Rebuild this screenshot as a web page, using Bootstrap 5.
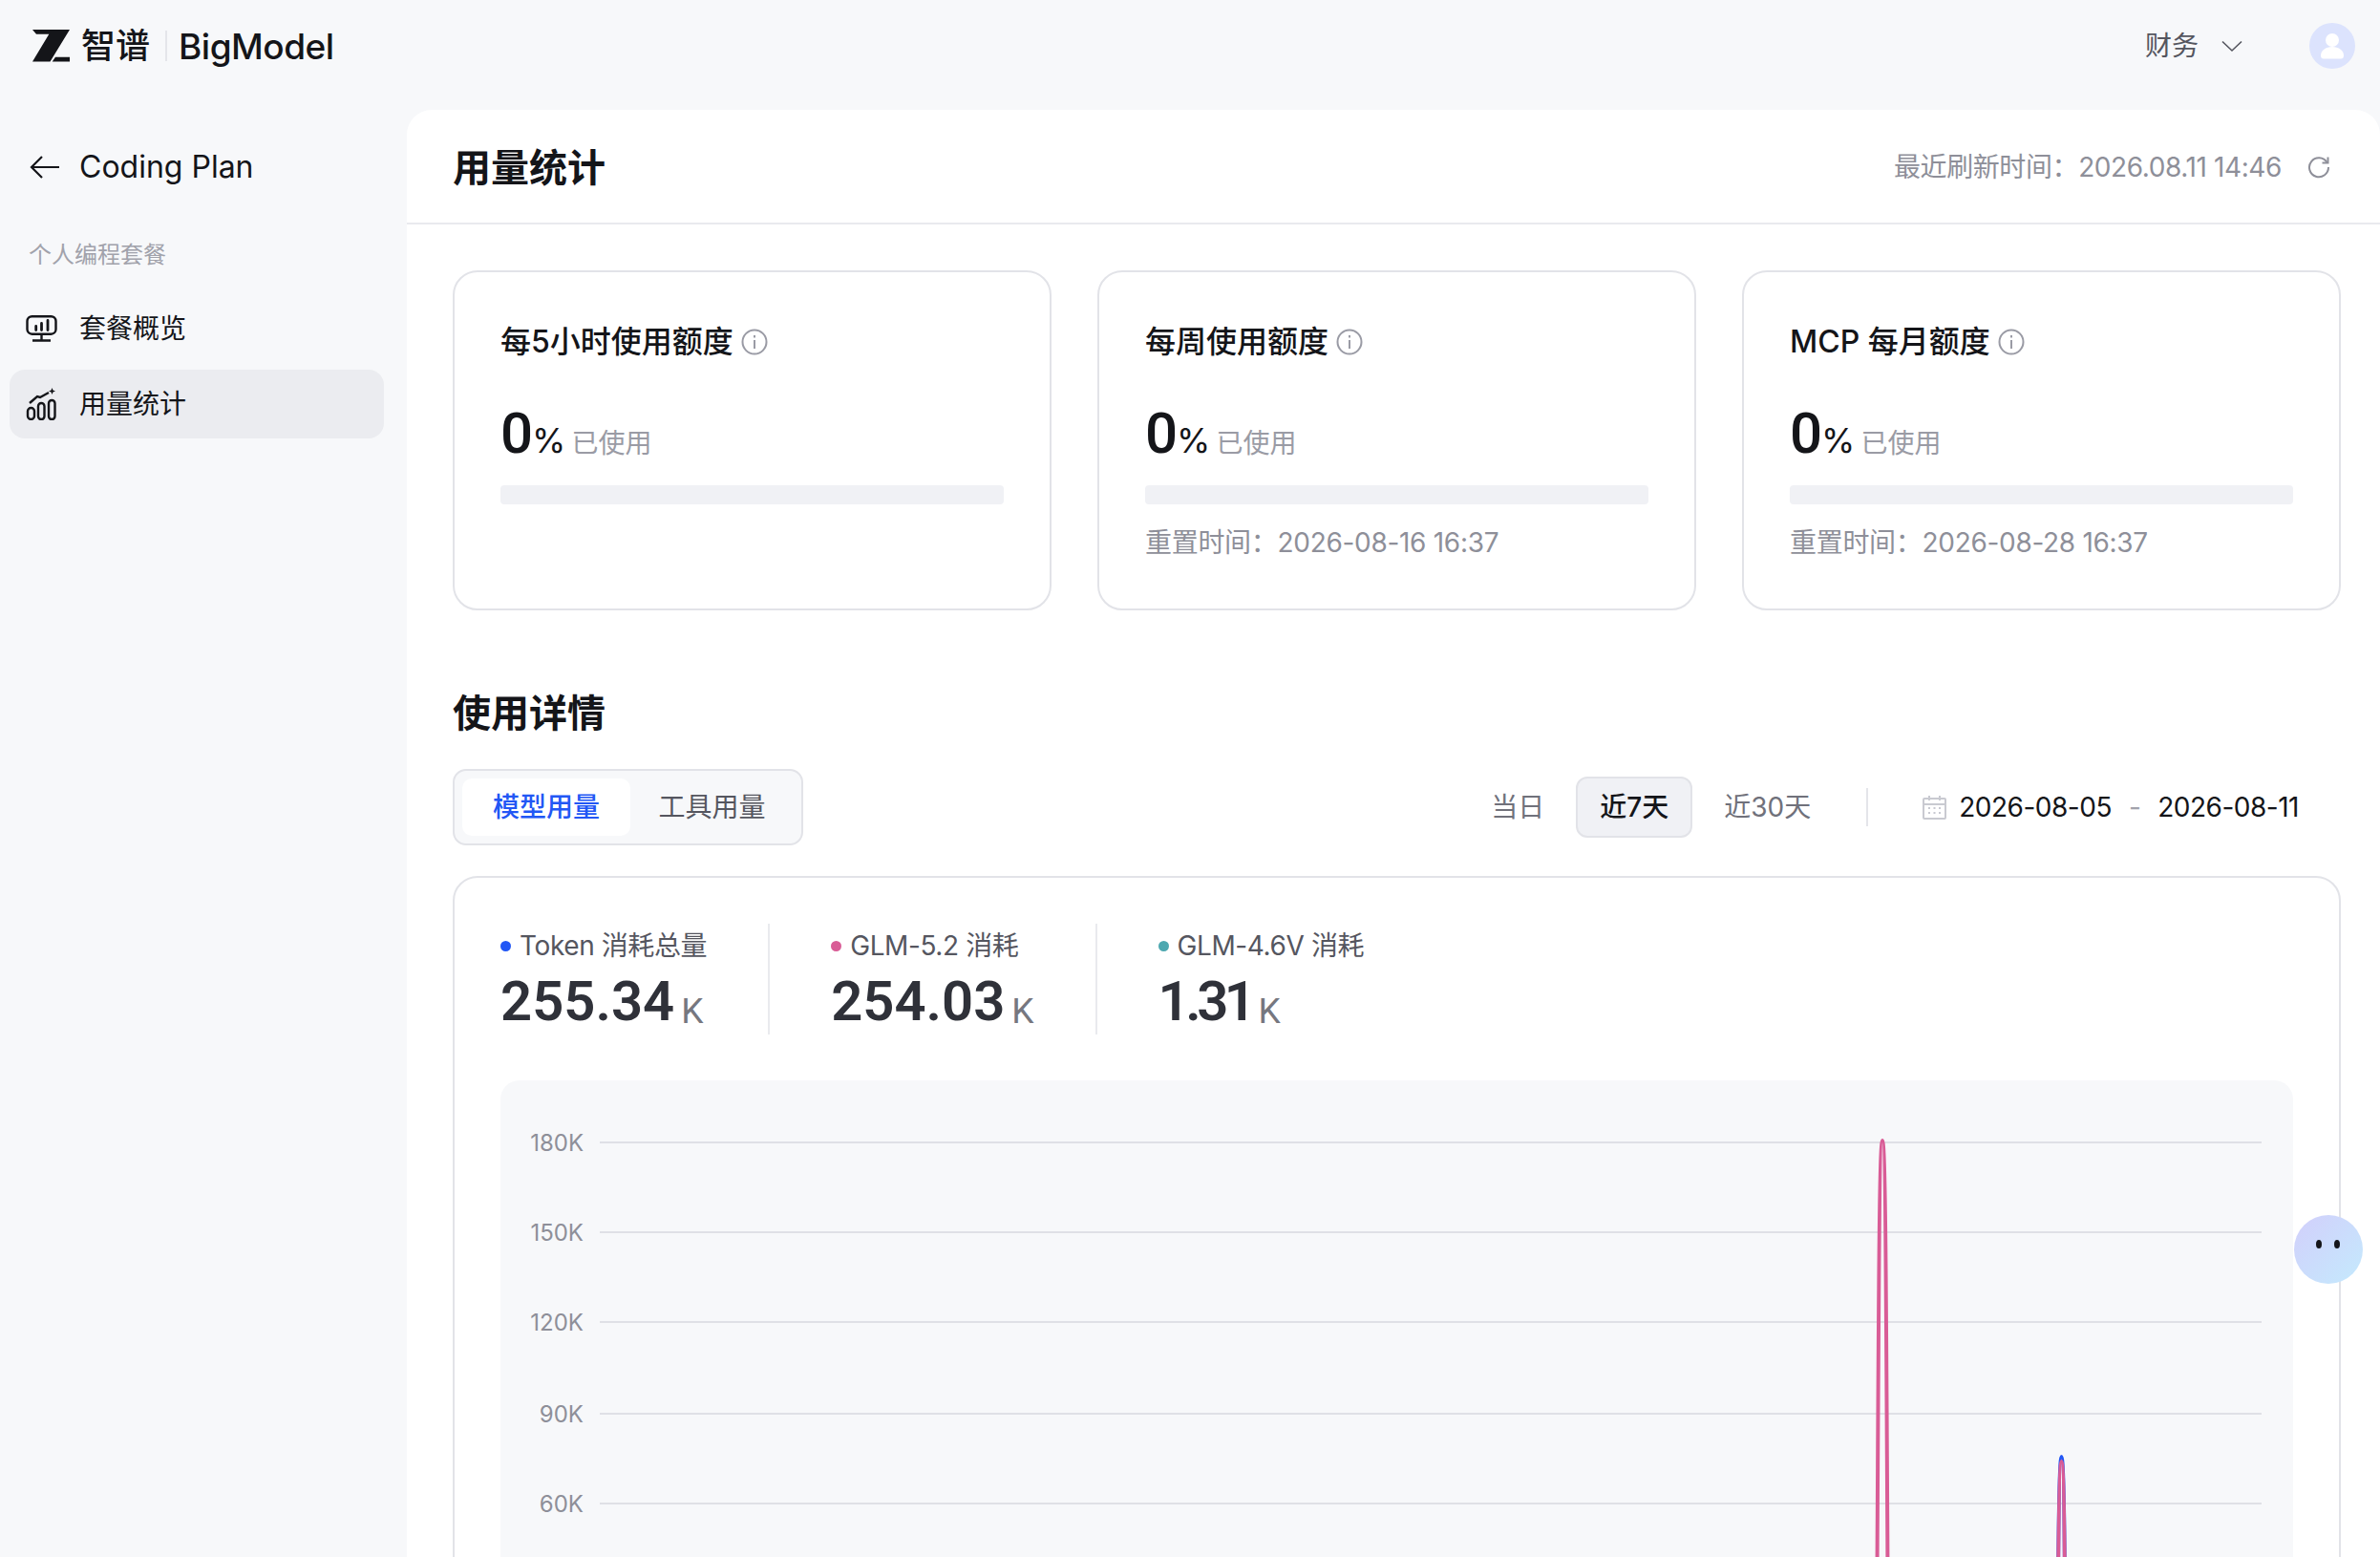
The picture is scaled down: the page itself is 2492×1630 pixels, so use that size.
<!DOCTYPE html>
<html lang="zh-CN">
<head>
    <meta charset="UTF-8">
    <title>BigModel - 用量统计</title>
    <link href="https://cdn.jsdelivr.net/npm/bootstrap@5.3.0/dist/css/bootstrap.min.css" rel="stylesheet">
    <style>
        html, body { height: 100%; }
        body {
            background: #f7f8fa;
            color: #141519;
            font-family: Inter, "Noto Sans CJK SC", sans-serif;
            overflow: hidden;
        }
        .top-strip { height: 115px; padding: 0 26px 19px 34px; }
        .logo-cn { font-size: 36px; font-weight: 500; margin-left: 12px; line-height: 1; }
        .logo-sep { width: 2px; height: 32px; background: #e4e5ea; margin: 0 12px 0 16px; }
        .logo-en { font-size: 37px; font-weight: 500; letter-spacing: -.5px; line-height: 1; }
        .top-link { font-size: 28px; color: #55565f; }
        .top-face { width: 48px; height: 48px; border-radius: 50%; background: #dce3fd; margin-left: 70px; }

        .side-col { width: 426px; flex: none; padding: 0 24px 0 10px; }
        .side-head { font-size: 32px; height: 119px; padding-left: 21px; gap: 20px; }
        .side-group { font-size: 24px; color: #a1a2ab; padding: 19px 0 0 20px; line-height: 1; margin-bottom: 29px; margin-top: 2px; }
        .side-item { height: 72px; font-size: 28px; padding-left: 17px; gap: 22px; border-radius: 16px; margin-bottom: 7px; color: #141519; }
        .side-on { background: #ebecf0; }

        .main-pane { background: #fff; border-radius: 26px 26px 0 0; min-width: 0; }
        .pane-head { height: 120px; padding: 0 52px 0 48px; border-bottom: 2px solid #e9eaee; }
        .pane-title { font-size: 40px; font-weight: 600; margin: 0; line-height: 1.2; padding-top: 3px; }
        .pane-time { font-size: 28px; color: #8e8f99; letter-spacing: -.4px; padding-top: 2px; }
        .pane-time svg { margin-left: 27px; }
        .pane-body { padding: 48px 41px 0 48px; }

        .quota-grid { display: grid; grid-template-columns: repeat(3, 1fr); gap: 48px; }
        .quota-box { height: 356px; border: 2px solid #e2e3e8; border-radius: 26px; padding: 50px 48px 0; }
        .quota-name { font-size: 32px; font-weight: 500; line-height: 46px; }
        .quota-num { margin-top: 35px; line-height: 76px; height: 76px; }
        .quota-num b { font-family: Roboto, sans-serif; font-size: 60px; font-weight: 500; }
        .quota-num i { font-style: normal; font-size: 36px; margin-left: -1px; }
        .quota-num span { font-size: 28px; color: #9a9ba5; margin-left: 6px; }
        .quota-bar { height: 20px; background: #f0f1f5; border-radius: 4px; margin-top: 16px; }
        .quota-reset { font-size: 28px; color: #8e8f99; margin-top: 20px; line-height: 40px; letter-spacing: -.3px; }

        .detail-title { font-size: 40px; font-weight: 600; margin: 84px 0 34px; height: 48px; line-height: 48px; }
        .seg-box { height: 80px; width: 367px; border: 2px solid #e2e3e8; border-radius: 14px; background: #f7f8fa; padding: 8px; font-size: 28px; color: #55565f; }
        .seg-item { width: 176px; text-align: center; line-height: 60px; border-radius: 10px; }
        .seg-on { background: #fff; color: #2257f5; font-weight: 500; }
        .seg-alt { flex: 1; text-align: center; line-height: 60px; }

        .range-tab { font-size: 28px; color: #70717b; height: 64px; line-height: 64px; padding: 0 33px; }
        .range-on { background: #f0f1f5; border: 2px solid #e2e3e8; border-radius: 12px; color: #141519; font-weight: 500; padding: 0 23px; line-height: 60px; }
        .range-sep { width: 2px; height: 40px; background: #e4e5ea; margin: 0 57px 0 25px; }
        .range-date { font-size: 28px; padding-right: 44px; letter-spacing: -.5px; }
        .range-date svg { margin-right: 13px; }
        .range-dash { color: #a1a2ab; margin: 0 18px; }

        .chart-box { border: 2px solid #e2e3e8; border-radius: 26px 26px 0 0; margin-top: 32px; padding: 48px 48px 0; height: 900px; }
        .stat-item { padding-right: 64px; height: 116px; margin-right: 64px; border-right: 2px solid #e9eaee; }
        .stat-item:last-child { border-right: 0; }
        .stat-label { font-size: 28px; color: #55565f; line-height: 36px; display: flex; align-items: center; gap: 9px; padding-top: 5px; letter-spacing: -.4px; }
        .stat-dot { width: 11px; height: 11px; border-radius: 50%; }
        .stat-val { font-family: Roboto, sans-serif; font-size: 58px; font-weight: 600; color: #2f3139; line-height: 66px; margin-top: 7px; white-space: nowrap; }
        .stat-val small { font-size: 37px; font-weight: 400; color: #76777f; margin-left: 7px; vertical-align: -3px; }
        .stat-tight { letter-spacing: -4.500px; }
        .plot-box { background: #f7f8fa; border-radius: 20px; margin-top: 48px; height: 700px; }
        .plot-box svg { display: block; }
        .plot-box text { font-size: 24px; fill: #8e8f99; font-family: Inter, sans-serif; }

        .help-blob {
            position: fixed; left: 2402px; top: 1272px; width: 72px; height: 72px; border-radius: 50%;
            background: linear-gradient(135deg, #d2cffb, #c4eafd);
        }
        .help-blob::before, .help-blob::after {
            content: ""; position: absolute; top: 26px; width: 6px; height: 9px; border-radius: 50%; background: #141519;
        }
        .help-blob::before { left: 23px; }
        .help-blob::after { left: 42px; }
    </style>
</head>
<body class="d-flex flex-column">

<!-- 顶部 -->
<header class="top-strip d-flex align-items-center justify-content-between flex-shrink-0">
    <div class="d-flex align-items-center">
        <svg width="39" height="34" viewBox="0 0 39 34" fill="#141519"><path d="M0 0H39L18.500 33.500H0L17.300 4.700H4Z"/><path d="M24 28.700H39V33.500H20.700Z"/></svg>
        <span class="logo-cn">智谱</span>
        <span class="logo-sep"></span>
        <span class="logo-en">BigModel</span>
    </div>
    <div class="d-flex align-items-center">
        <span class="top-link">财务</span>
        <svg class="ms-4" width="22" height="13" viewBox="0 0 22 13" fill="none" stroke="#55565f" stroke-width="1.600"><path d="M1 1.500L11 11L21 1.500"/></svg>
        <div class="top-face d-flex align-items-center justify-content-center">
            <svg width="26" height="27" viewBox="0 0 26 27" fill="#fff"><circle cx="13" cy="7" r="7"/><path d="M1 23C1 18 6 14 13 14S25 18 25 23C25 25.500 24 26.500 22 26.500H4C2 26.500 1 25.500 1 23Z"/></svg>
        </div>
    </div>
</header>

<div class="d-flex flex-grow-1" style="min-height:0">
    <!-- 左侧菜单 -->
    <aside class="side-col">
        <div class="side-head d-flex align-items-center">
            <svg width="32" height="26" viewBox="0 0 32 26" fill="none" stroke="#141519" stroke-width="2.200"><path d="M31 13H2M13 2L2 13L13 24"/></svg>
            <span>Coding Plan</span>
        </div>
        <div class="side-group">个人编程套餐</div>
        <div class="side-item d-flex align-items-center">
            <svg width="34" height="28" viewBox="0 0 34 28" fill="none" stroke="#141519" stroke-width="2.400"><rect x="1.500" y="1.200" width="30" height="18.500" rx="5"/><path d="M10.700 11.500V15.500M16.500 8.500V15.500M23 5.500V15.500" stroke-width="2.800" stroke-linecap="round"/><path d="M7 26.500H26M16.500 20V26"/></svg>
            <span>套餐概览</span>
        </div>
        <div class="side-item side-on d-flex align-items-center">
            <svg width="34" height="34" viewBox="0 0 34 34" fill="none" stroke="#141519" stroke-width="2.400"><rect x="2" y="21" width="7" height="12" rx="3.500"/><rect x="13" y="16" width="6.500" height="17" rx="3.250"/><rect x="24" y="13" width="6.500" height="20" rx="3.250"/><path d="M4 16L12 9L15 10L24 5"/><path d="M27.500 0L28.500 2.500L31 3.500L28.500 4.500L27.500 7L26.500 4.500L24 3.500L26.500 2.500Z" fill="#141519" stroke="none"/></svg>
            <span>用量统计</span>
        </div>
    </aside>

    <!-- 内容 -->
    <main class="main-pane flex-grow-1">
        <div class="pane-head d-flex align-items-center justify-content-between">
            <h1 class="pane-title">用量统计</h1>
            <div class="pane-time d-flex align-items-center">
                <span>最近刷新时间：2026.08.11 14:46</span>
                <svg width="24" height="24" viewBox="0 0 24 24" fill="none" stroke="#8e8f99" stroke-width="2"><path d="M20.500 7A10 10 0 1 0 22 12"/><path d="M21.500 1.500V7.500H15.500"/></svg>
            </div>
        </div>

        <div class="pane-body">
            <div class="quota-grid">
                <div class="quota-box">
                    <div class="quota-name d-flex align-items-center gap-2">每5小时使用额度 <svg width="28" height="28" viewBox="0 0 28 28" fill="none" stroke="#9a9ba5" stroke-width="2"><circle cx="14" cy="14" r="12.500"/><path d="M14 12V21M14 7V9.500"/></svg></div>
                    <div class="quota-num"><b>0</b><i>%</i><span>已使用</span></div>
                    <div class="quota-bar"></div>
                </div>
                <div class="quota-box">
                    <div class="quota-name d-flex align-items-center gap-2">每周使用额度 <svg width="28" height="28" viewBox="0 0 28 28" fill="none" stroke="#9a9ba5" stroke-width="2"><circle cx="14" cy="14" r="12.500"/><path d="M14 12V21M14 7V9.500"/></svg></div>
                    <div class="quota-num"><b>0</b><i>%</i><span>已使用</span></div>
                    <div class="quota-bar"></div>
                    <div class="quota-reset">重置时间：2026-08-16 16:37</div>
                </div>
                <div class="quota-box">
                    <div class="quota-name d-flex align-items-center gap-2">MCP 每月额度 <svg width="28" height="28" viewBox="0 0 28 28" fill="none" stroke="#9a9ba5" stroke-width="2"><circle cx="14" cy="14" r="12.500"/><path d="M14 12V21M14 7V9.500"/></svg></div>
                    <div class="quota-num"><b>0</b><i>%</i><span>已使用</span></div>
                    <div class="quota-bar"></div>
                    <div class="quota-reset">重置时间：2026-08-28 16:37</div>
                </div>
            </div>

            <h2 class="detail-title">使用详情</h2>

            <div class="d-flex align-items-center justify-content-between">
                <div class="seg-box d-flex">
                    <div class="seg-item seg-on">模型用量</div>
                    <div class="seg-alt">工具用量</div>
                </div>
                <div class="d-flex align-items-center">
                    <div class="range-tab">当日</div>
                    <div class="range-tab range-on">近7天</div>
                    <div class="range-tab">近30天</div>
                    <div class="range-sep"></div>
                    <div class="range-date d-flex align-items-center">
                        <svg width="25" height="25" viewBox="0 0 25 25" fill="none" stroke="#c9cad1" stroke-width="2"><rect x="1" y="3" width="23" height="21" rx="1"/><path d="M1 9H24M7 0V5M18 0V5"/><path d="M6 13H8M11.500 13H13.500M17 13H19M6 18H8M11.500 18H13.500M17 18H19"/></svg>
                        <span>2026-08-05</span><span class="range-dash">-</span><span>2026-08-11</span>
                    </div>
                </div>
            </div>

            <div class="chart-box">
                <div class="d-flex">
                    <div class="stat-item">
                        <div class="stat-label"><i class="stat-dot" style="background:#2257f5"></i>Token 消耗总量</div>
                        <div class="stat-val">255.34<small>K</small></div>
                    </div>
                    <div class="stat-item">
                        <div class="stat-label"><i class="stat-dot" style="background:#d95c96"></i>GLM-5.2 消耗</div>
                        <div class="stat-val">254.03<small>K</small></div>
                    </div>
                    <div class="stat-item">
                        <div class="stat-label"><i class="stat-dot" style="background:#4da8b0"></i>GLM-4.6V 消耗</div>
                        <div class="stat-val"><span class="stat-tight">1.31</span><small>K</small></div>
                    </div>
                </div>
                <div class="plot-box">
                    <svg id="plot" width="100%" height="700"></svg>
                </div>
            </div>
        </div>
    </main>
</div>

<div class="help-blob"></div>

<script>
    // 图表坐标都相对 plot-box 左上角 (524,1131)
    const ticks = [['180K',65],['150K',159],['120K',253],['90K',349],['60K',443]]
    let html = ''
    ticks.forEach(t => {
        html += `<text x="87" y="${t[1] + 9}" text-anchor="end">${t[0]}</text>`
        html += `<line x1="104" x2="1844" y1="${t[1]}" y2="${t[1]}" stroke="#dfe0e6" stroke-width="2"/>`
    })
    function spike(cx, top, color){
        const base = top + 450
        return `<path d="M${cx-5.5} ${base}C${cx-4} ${top+200} ${cx-3.5} ${top} ${cx} ${top}C${cx+3.5} ${top} ${cx+4} ${top+200} ${cx+5.5} ${base}" fill="none" stroke="${color}" stroke-width="4"/>`
    }
    html += spike(1447, 63, '#d95c96')
    html += spike(1634.5, 394, '#2257f5') + spike(1634.5, 399, '#d95c96')
    document.getElementById('plot').innerHTML = html
</script>
<script src="https://cdn.jsdelivr.net/npm/bootstrap@5.3.0/dist/js/bootstrap.bundle.min.js"></script>
</body>
</html>
